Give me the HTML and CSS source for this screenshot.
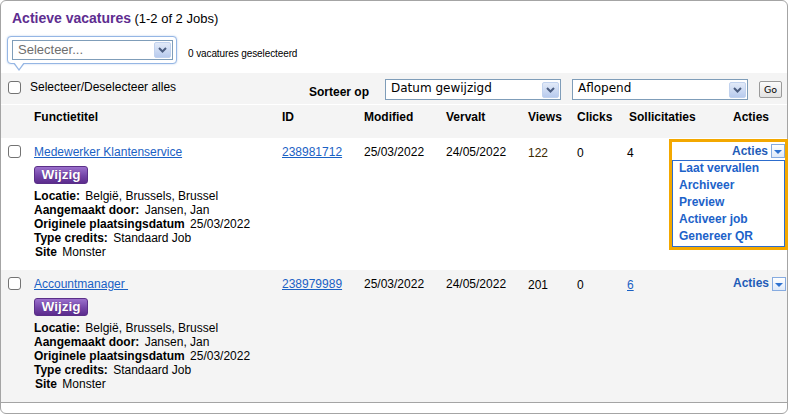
FILE: index.html
```html
<!DOCTYPE html>
<html lang="nl">
<head>
<meta charset="utf-8">
<title>Actieve vacatures</title>
<link rel="stylesheet" href="styles.css">
</head>
<body>
<div class="panel">
  <div class="title"><span class="t-main">Actieve vacatures</span> <span class="t-count">(1-2 of 2 Jobs)</span></div>

  <div class="bulk">
    <div class="bubble">
      <div class="select sel-bulk">
        <span class="sel-text muted">Selecteer...</span>
        <span class="sel-btn"><svg width="9" height="6" viewBox="0 0 9 6"><path d="M1 1l3.5 3.5L8 1" fill="none" stroke="#4b5d80" stroke-width="2"/></svg></span>
      </div>
    </div>
    <span class="bulk-count">0 vacatures geselecteerd</span>
  </div>

  <div class="toolbar">
    <div class="selall"><span class="cb"></span><span class="selall-text">Selecteer/Deselecteer alles</span></div>
    <div class="sort">
      <span class="sort-label">Sorteer op</span>
      <div class="select sel-sort sel-field">
        <span class="sel-text">Datum gewijzigd</span>
        <span class="sel-btn"><svg width="9" height="6" viewBox="0 0 9 6"><path d="M1 1l3.5 3.5L8 1" fill="none" stroke="#4b5d80" stroke-width="2"/></svg></span>
      </div>
      <div class="select sel-sort sel-order">
        <span class="sel-text">Aflopend</span>
        <span class="sel-btn"><svg width="9" height="6" viewBox="0 0 9 6"><path d="M1 1l3.5 3.5L8 1" fill="none" stroke="#4b5d80" stroke-width="2"/></svg></span>
      </div>
      <span class="go">Go</span>
    </div>
  </div>

  <div class="grid head">
    <span></span>
    <span>Functietitel</span>
    <span>ID</span>
    <span>Modified</span>
    <span>Vervalt</span>
    <span>Views</span>
    <span>Clicks</span>
    <span>Sollicitaties</span>
    <span class="c-act-head">Acties</span>
  </div>

  <div class="grid job">
    <span class="cb"></span>
    <div class="c-title">
      <a class="lnk" href="#">Medewerker Klantenservice</a>
      <div class="wijzig">Wijzig</div>
      <div class="details">
        <div><span class="lbl">Locatie:</span> België, Brussels, Brussel</div>
        <div><span class="lbl">Aangemaakt door:</span> Jansen, Jan</div>
        <div><span class="lbl">Originele plaatsingsdatum</span> 25/03/2022</div>
        <div><span class="lbl">Type credits:</span> Standaard Job</div>
        <div class="site"><span class="lbl">Site</span> Monster</div>
      </div>
    </div>
    <span><a class="lnk" href="#">238981712</a></span>
    <span>25/03/2022</span>
    <span>24/05/2022</span>
    <span class="num views-hi">122</span>
    <span class="num">0</span>
    <span class="num c-sol">4</span>
    <span></span>
    <div class="acties-open">
      <div class="acties-head"><span class="acties-txt">Acties</span><span class="dd-icon"></span></div>
      <div class="menu">
        <a href="#">Laat vervallen</a>
        <a href="#">Archiveer</a>
        <a href="#">Preview</a>
        <a href="#">Activeer job</a>
        <a href="#">Genereer QR</a>
      </div>
    </div>
  </div>

  <div class="grid job alt">
    <span class="cb"></span>
    <div class="c-title">
      <a class="lnk" href="#">Accountmanager&nbsp;</a>
      <div class="wijzig">Wijzig</div>
      <div class="details">
        <div><span class="lbl">Locatie:</span> België, Brussels, Brussel</div>
        <div><span class="lbl">Aangemaakt door:</span> Jansen, Jan</div>
        <div><span class="lbl">Originele plaatsingsdatum</span> 25/03/2022</div>
        <div><span class="lbl">Type credits:</span> Standaard Job</div>
        <div class="site"><span class="lbl">Site</span> Monster</div>
      </div>
    </div>
    <span><a class="lnk" href="#">238979989</a></span>
    <span>25/03/2022</span>
    <span>24/05/2022</span>
    <span class="num">201</span>
    <span class="num">0</span>
    <span class="num c-sol"><a class="lnk" href="#">6</a></span>
    <div class="c-act"><span class="acties-txt">Acties</span><span class="dd-icon"></span></div>
  </div>

  <div class="foot"></div>
</div>
</body>
</html>
```
FILE: styles.css
```css
* { box-sizing: border-box; }

body {
  margin: 0;
  font-family: "Liberation Sans", Arial, sans-serif;
  font-size: 12px;
  color: #000;
  background: #fff;
}

.panel {
  width: 788px;
  height: 414px;
  border: 1px solid #a4a4a4;
  border-radius: 6px;
  display: flex;
  flex-direction: column;
  position: relative;
  background: #fff;
}

/* title */
.title {
  height: 25px;
  padding: 9px 0 0 11px;
  line-height: 16px;
}
.t-main {
  font-size: 14px;
  font-weight: bold;
  color: #5e2d90;
}
.t-count { font-size: 13px; }

/* bulk selection */
.bulk {
  height: 37px;
  margin-top: 10px;
  padding-left: 6px;
  display: flex;
  align-items: flex-start;
  flex-shrink: 0;
}
.bubble {
  position: relative;
  width: 170px;
  height: 28px;
  border: 1px solid #95b6e4;
  border-radius: 4px;
  padding: 3px 3px 3px 4px;
  background: #fff;
  box-shadow: 0 0 2px rgba(120, 160, 220, 0.55);
}
.bubble::before {
  content: "";
  position: absolute;
  left: 5px;
  top: 100%;
  border-left: 6px solid transparent;
  border-right: 6px solid transparent;
  border-top: 8px solid #95b6e4;
}
.bubble::after {
  content: "";
  position: absolute;
  left: 6px;
  top: calc(100% - 1px);
  border-left: 5px solid transparent;
  border-right: 5px solid transparent;
  border-top: 7px solid #fff;
}
.bulk-count {
  margin-left: 11px;
  align-self: center;
  margin-top: -2px;
  font-size: 10px;
  letter-spacing: -0.1px;
}

/* select boxes */
.select {
  position: relative;
  border: 1px solid #7f9db9;
  background: #fff;
}
.sel-bulk {
  width: 161px;
  height: 20px;
}
.sel-text {
  display: block;
  padding-left: 5px;
  white-space: nowrap;
}
.sel-bulk .sel-text {
  font-size: 13px;
  line-height: 18px;
}
.muted { color: #6e6e6e; }
.sel-btn {
  position: absolute;
  right: 1px;
  top: 1px;
  bottom: 1px;
  width: 17px;
  border: 1px solid #c1d2ee;
  border-radius: 2px;
  background: linear-gradient(#e2eaf8, #b8cbee);
  display: flex;
  align-items: center;
  justify-content: center;
}

/* toolbar */
.toolbar {
  height: 32px;
  background: #f4f4f4;
  border-bottom: 1px solid #fff;
  display: flex;
  padding-left: 7px;
  flex-shrink: 0;
}
.selall {
  width: 301px;
  display: flex;
  align-items: flex-start;
}
.cb {
  display: block;
  width: 13px;
  height: 13px;
  border: 1px solid #737373;
  border-radius: 3px;
  background: #fff;
}
.selall .cb { margin-top: 8px; }
.selall-text {
  margin-left: 9px;
  margin-top: 7px;
  line-height: 14px;
}
.sort {
  display: flex;
  align-items: flex-start;
  padding-top: 6px;
}
.sort-label {
  width: 76px;
  margin-top: 6px;
  line-height: 14px;
  font-weight: bold;
}
.sel-sort {
  height: 21px;
  font-family: "DejaVu Sans", Verdana, sans-serif;
  font-size: 12px;
}
.sel-sort .sel-text { line-height: 16px; }
.sel-field { width: 176px; }
.sel-order { width: 176px; margin-left: 11px; }
.sel-sort .sel-btn { top: 2px; bottom: 1px; right: 1px; }
.go {
  margin-left: 11px;
  margin-top: 2px;
  width: 23px;
  height: 17px;
  border: 1px solid #9a9a9a;
  border-radius: 2px;
  background: linear-gradient(#fbfbfb, #e2e2e2);
  font-family: "DejaVu Sans", Verdana, sans-serif;
  font-size: 9.5px;
  line-height: 15px;
  text-align: center;
}

/* table grid */
.grid {
  display: grid;
  grid-template-columns: 26px 248px 82px 82px 82px 49px 52px 100px 1fr;
  padding-left: 7px;
  line-height: 14px;
  flex-shrink: 0;
}
.head {
  height: 33px;
  background: #f4f4f4;
  padding-top: 5px;
  font-weight: bold;
}
.c-act-head {
  text-align: right;
  padding-right: 18px;
}
.job {
  position: relative;
  height: 132px;
  padding-top: 7px;
  background: #fff;
}
.job.alt { background: #f4f4f4; }

.lnk {
  color: #1a61c4;
  text-decoration: underline;
}
.num { padding-top: 1px; }
.views-hi { color: #3d2a00; }
.c-sol { margin-left: -2px; }

.c-title {
  display: flex;
  flex-direction: column;
  align-items: flex-start;
}
.wijzig {
  margin-top: 7px;
  width: 54px;
  height: 18px;
  line-height: 16px;
  border: 1px solid #5a2f88;
  border-radius: 3px;
  background: linear-gradient(#9b70cc, #7445a8 55%, #5c2c8d);
  color: #fff;
  font-weight: bold;
  font-size: 13.5px;
  text-align: center;
  text-shadow: 0 0 1px rgba(40, 0, 70, 0.5);
}
.details {
  margin-top: 5px;
  line-height: 14px;
}
.lbl {
  font-weight: bold;
  margin-right: 2px;
}
.site { padding-left: 1px; }

/* acties */
.acties-txt {
  color: #1f5cb8;
  font-weight: bold;
}
.dd-icon {
  position: relative;
  display: block;
  width: 14px;
  height: 14px;
  margin-left: 3px;
  border: 1px solid #86abe0;
  background: linear-gradient(#ffffff, #dfe9f8);
}
.dd-icon::after {
  content: "";
  position: absolute;
  left: 2px;
  top: 5px;
  border-left: 4px solid transparent;
  border-right: 4px solid transparent;
  border-top: 4px solid #2f72d0;
}
.c-act {
  display: flex;
  justify-content: flex-end;
  align-items: flex-start;
  padding-right: 1px;
}
.c-act .acties-txt { margin-top: -1px; }

.acties-open {
  position: absolute;
  top: 1px;
  right: -1px;
  width: 119px;
  border: 3px solid #f3a800;
  background: #fff;
}
.acties-head {
  height: 18px;
  display: flex;
  justify-content: flex-end;
  align-items: flex-start;
  padding-top: 2px;
}
.acties-head .acties-txt { margin-top: 0; line-height: 14px; }
.menu {
  border: 1px solid #2c6ccd;
  padding-left: 6px;
}
.menu a {
  display: block;
  line-height: 14px;
  padding-bottom: 3px;
  color: #1d62c9;
  font-weight: bold;
  text-decoration: none;
  white-space: nowrap;
}

.foot {
  flex: 1;
  border-top: 1px solid #a4a4a4;
}
```
